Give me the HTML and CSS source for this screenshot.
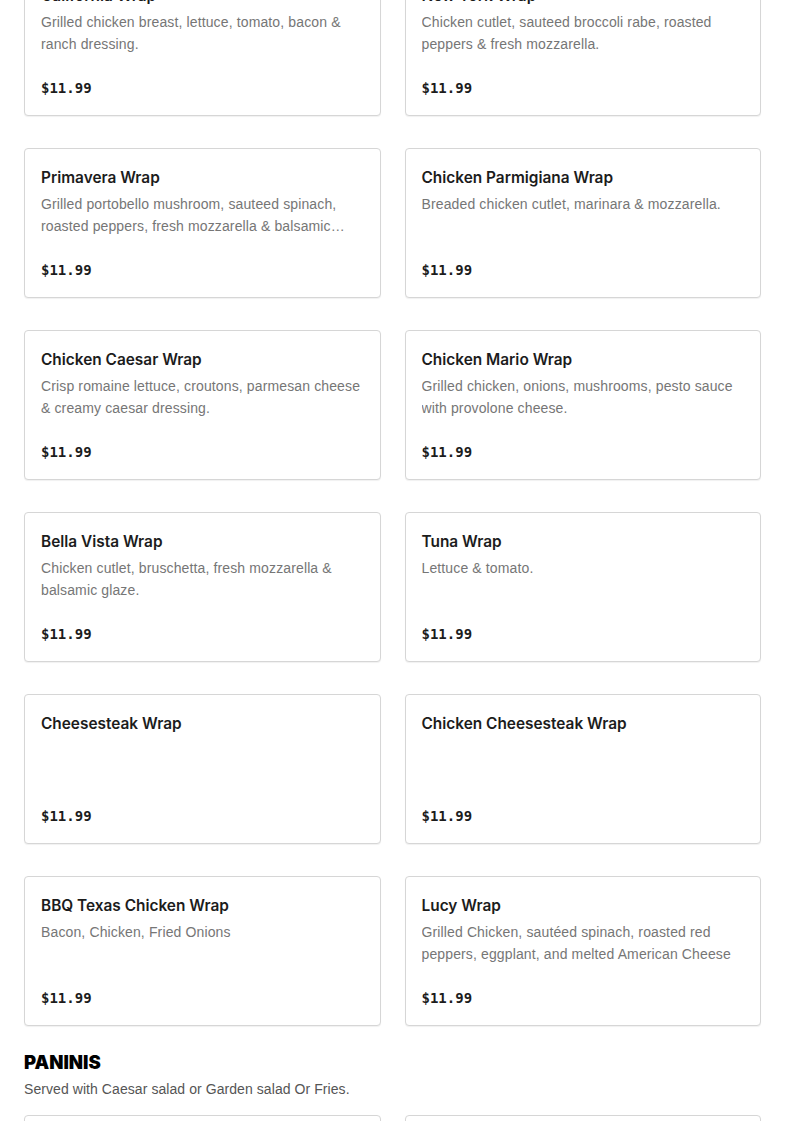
FILE: index.html
```html
<!DOCTYPE html>
<html lang="en">
<head>
<meta charset="utf-8">
<title>Menu</title>
<link rel="stylesheet" href="styles.css">
</head>
<body>
<main class="menu">
  <section class="section section--scrolled">
    <div class="grid">
      <article class="card"><h3 class="card-title">California Wrap</h3><p class="card-desc">Grilled chicken breast, lettuce, tomato, bacon &amp; ranch dressing.</p><div class="card-price">$11.99</div></article>
      <article class="card"><h3 class="card-title">New York Wrap</h3><p class="card-desc">Chicken cutlet, sauteed broccoli rabe, roasted peppers &amp; fresh mozzarella.</p><div class="card-price">$11.99</div></article>
      <article class="card"><h3 class="card-title">Primavera Wrap</h3><p class="card-desc">Grilled portobello mushroom, sauteed spinach, roasted peppers, fresh mozzarella &amp; balsamic glaze.</p><div class="card-price">$11.99</div></article>
      <article class="card"><h3 class="card-title">Chicken Parmigiana Wrap</h3><p class="card-desc">Breaded chicken cutlet, marinara &amp; mozzarella.</p><div class="card-price">$11.99</div></article>
      <article class="card"><h3 class="card-title">Chicken Caesar Wrap</h3><p class="card-desc">Crisp romaine lettuce, croutons, parmesan cheese &amp; creamy caesar dressing.</p><div class="card-price">$11.99</div></article>
      <article class="card"><h3 class="card-title">Chicken Mario Wrap</h3><p class="card-desc">Grilled chicken, onions, mushrooms, pesto sauce with provolone cheese.</p><div class="card-price">$11.99</div></article>
      <article class="card"><h3 class="card-title">Bella Vista Wrap</h3><p class="card-desc">Chicken cutlet, bruschetta, fresh mozzarella &amp; balsamic glaze.</p><div class="card-price">$11.99</div></article>
      <article class="card"><h3 class="card-title">Tuna Wrap</h3><p class="card-desc">Lettuce &amp; tomato.</p><div class="card-price">$11.99</div></article>
      <article class="card"><h3 class="card-title">Cheesesteak Wrap</h3><p class="card-desc"></p><div class="card-price">$11.99</div></article>
      <article class="card"><h3 class="card-title">Chicken Cheesesteak Wrap</h3><p class="card-desc"></p><div class="card-price">$11.99</div></article>
      <article class="card"><h3 class="card-title">BBQ Texas Chicken Wrap</h3><p class="card-desc">Bacon, Chicken, Fried Onions</p><div class="card-price">$11.99</div></article>
      <article class="card"><h3 class="card-title">Lucy Wrap</h3><p class="card-desc">Grilled Chicken, sautéed spinach, roasted red peppers, eggplant, and melted American Cheese</p><div class="card-price">$11.99</div></article>
    </div>
  </section>
  <section class="section">
    <h2 class="section-title">PANINIS</h2>
    <p class="section-sub">Served with Caesar salad or Garden salad Or Fries.</p>
    <div class="grid">
      <article class="card"><h3 class="card-title">Chicken Panini</h3><p class="card-desc">Grilled chicken, fresh mozzarella &amp; pesto.</p><div class="card-price">$12.99</div></article>
      <article class="card"><h3 class="card-title">Italian Panini</h3><p class="card-desc">Ham, salami, provolone &amp; roasted peppers.</p><div class="card-price">$12.99</div></article>
    </div>
  </section>
</main>
</body>
</html>
```

FILE: styles.css
```css
html, body {
  margin: 0;
  padding: 0;
  background: #ffffff;
}

body {
  font-family: "Liberation Sans", Arial, sans-serif;
  color: #1f1f1f;
  overflow: hidden;
}

.menu {
  padding: 0 24px;
  margin-top: -34px;
}

.grid {
  display: grid;
  grid-template-columns: 1fr 1fr;
  column-gap: 24px;
  row-gap: 32px;
}

.card {
  box-sizing: border-box;
  height: 150px;
  border: 1px solid #d6d6d6;
  border-radius: 4px;
  box-shadow: 0 1px 1px rgba(0, 0, 0, 0.06);
  padding: 17px 16px 17px;
  display: flex;
  flex-direction: column;
  background: #fff;
}

.card-title {
  margin: 0;
  font-family: "Inter", "Liberation Sans", sans-serif;
  font-size: 15.4px;
  font-weight: 600;
  line-height: 24px;
  color: #1c1c1c;
  white-space: nowrap;
}

.card-desc {
  margin: 3px 0 0;
  font-family: "Liberation Sans", Arial, sans-serif;
  font-size: 14px;
  letter-spacing: 0.13px;
  line-height: 22px;
  color: #767676;
  height: 44px;
  overflow: hidden;
  display: -webkit-box;
  -webkit-line-clamp: 2;
  -webkit-box-orient: vertical;
}

.card-price {
  margin-top: auto;
  font-family: "DejaVu Sans Mono", "Liberation Mono", monospace;
  font-size: 14px;
  font-weight: 700;
  line-height: 20px;
  color: #1c1c1c;
}

.section + .section {
  margin-top: 24px;
}

.section-title {
  margin: 0;
  font-family: "Inter", "Liberation Sans", sans-serif;
  font-size: 18.5px;
  font-weight: 900;
  line-height: 24px;
  color: #000;
}

.section-sub {
  margin: 4px 0 15px;
  font-size: 14px;
  letter-spacing: 0.07px;
  line-height: 22px;
  color: #555;
}
```
